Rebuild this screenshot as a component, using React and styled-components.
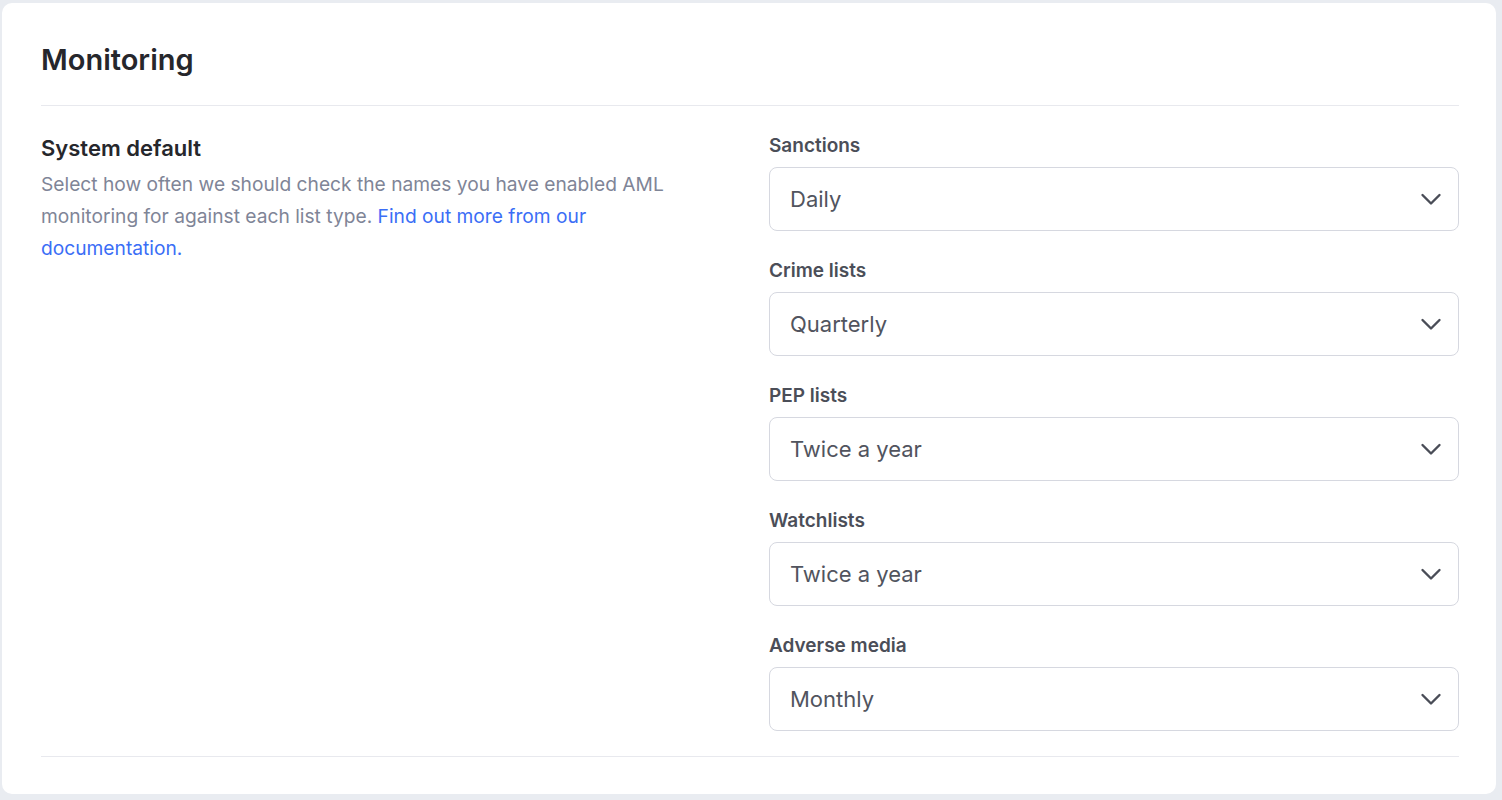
import React from 'react';
import styled, { createGlobalStyle } from 'styled-components';

const GlobalStyle = createGlobalStyle`
  html, body {
    margin: 0;
    padding: 0;
    background: #e9ecf1;
    font-family: Inter, "Noto Sans", "Liberation Sans", sans-serif;
  }
`;

const Page = styled.div`
  height: 800px;
  box-sizing: border-box;
  padding: 3px 6px 6px 2px;
`;

const Card = styled.section`
  height: 100%;
  box-sizing: border-box;
  background: #ffffff;
  border-radius: 10px;
  padding: 40px 37px 0 39px;
`;

const Title = styled.h1`
  margin: 0;
  font-size: 29px;
  line-height: 34px;
  font-weight: 600;
  color: #26272c;
`;

const Divider = styled.hr`
  border: none;
  height: 1px;
  background: #e8e9ee;
  margin: ${props => props.margin || '0'};
`;

const Body = styled.div`
  display: grid;
  grid-template-columns: 1fr 1fr;
  column-gap: 38px;
  padding-top: 28px;
`;

const Intro = styled.div`
  display: flex;
  flex-direction: column;
  gap: 6px;
`;

const Heading = styled.h2`
  margin: 0;
  font-size: 22px;
  line-height: 28px;
  font-weight: 600;
  color: #26272c;
`;

const Description = styled.p`
  margin: 0;
  font-size: 19.2px;
  line-height: 32px;
  color: #7f8597;
`;

const Link = styled.a`
  color: #3b6ef6;
  text-decoration: none;
`;

const Fields = styled.div`
  display: flex;
  flex-direction: column;
  gap: 28px;
`;

const Field = styled.div`
  display: flex;
  flex-direction: column;
  gap: 9px;
`;

const Label = styled.label`
  font-size: 19px;
  line-height: 24px;
  font-weight: 600;
  color: #4b4e58;
`;

const Select = styled.div`
  height: 64px;
  box-sizing: border-box;
  border: 1px solid #d6d8e0;
  border-radius: 8px;
  display: flex;
  align-items: center;
  justify-content: space-between;
  padding: 0 15px 0 20px;
  font-size: 22px;
  color: #51545e;
  background: #fff;
`;

const Chevron = () => (
  <svg width="24" height="24" viewBox="0 0 24 24" fill="none">
    <path d="M3.5 8l8.5 8.5 8.5-8.5" stroke="#4a4d57" strokeWidth="2.4" strokeLinecap="round" strokeLinejoin="round" />
  </svg>
);

const fields = [
  { label: 'Sanctions', value: 'Daily' },
  { label: 'Crime lists', value: 'Quarterly' },
  { label: 'PEP lists', value: 'Twice a year' },
  { label: 'Watchlists', value: 'Twice a year' },
  { label: 'Adverse media', value: 'Monthly' }
];

const App = () => (
  <Page>
    <GlobalStyle />
    <Card>
      <Title>Monitoring</Title>
      <Divider margin="28px 0 0" />
      <Body>
        <Intro>
          <Heading>System default</Heading>
          <Description>
            Select how often we should check the names you have enabled AML monitoring for against
            each list type. <Link href="#">Find out more from our documentation.</Link>
          </Description>
        </Intro>
        <Fields>
          {fields.map(f => (
            <Field key={f.label}>
              <Label>{f.label}</Label>
              <Select>
                <span>{f.value}</span>
                <Chevron />
              </Select>
            </Field>
          ))}
        </Fields>
      </Body>
      <Divider margin="25px 0 0" />
    </Card>
  </Page>
);

export default App;
